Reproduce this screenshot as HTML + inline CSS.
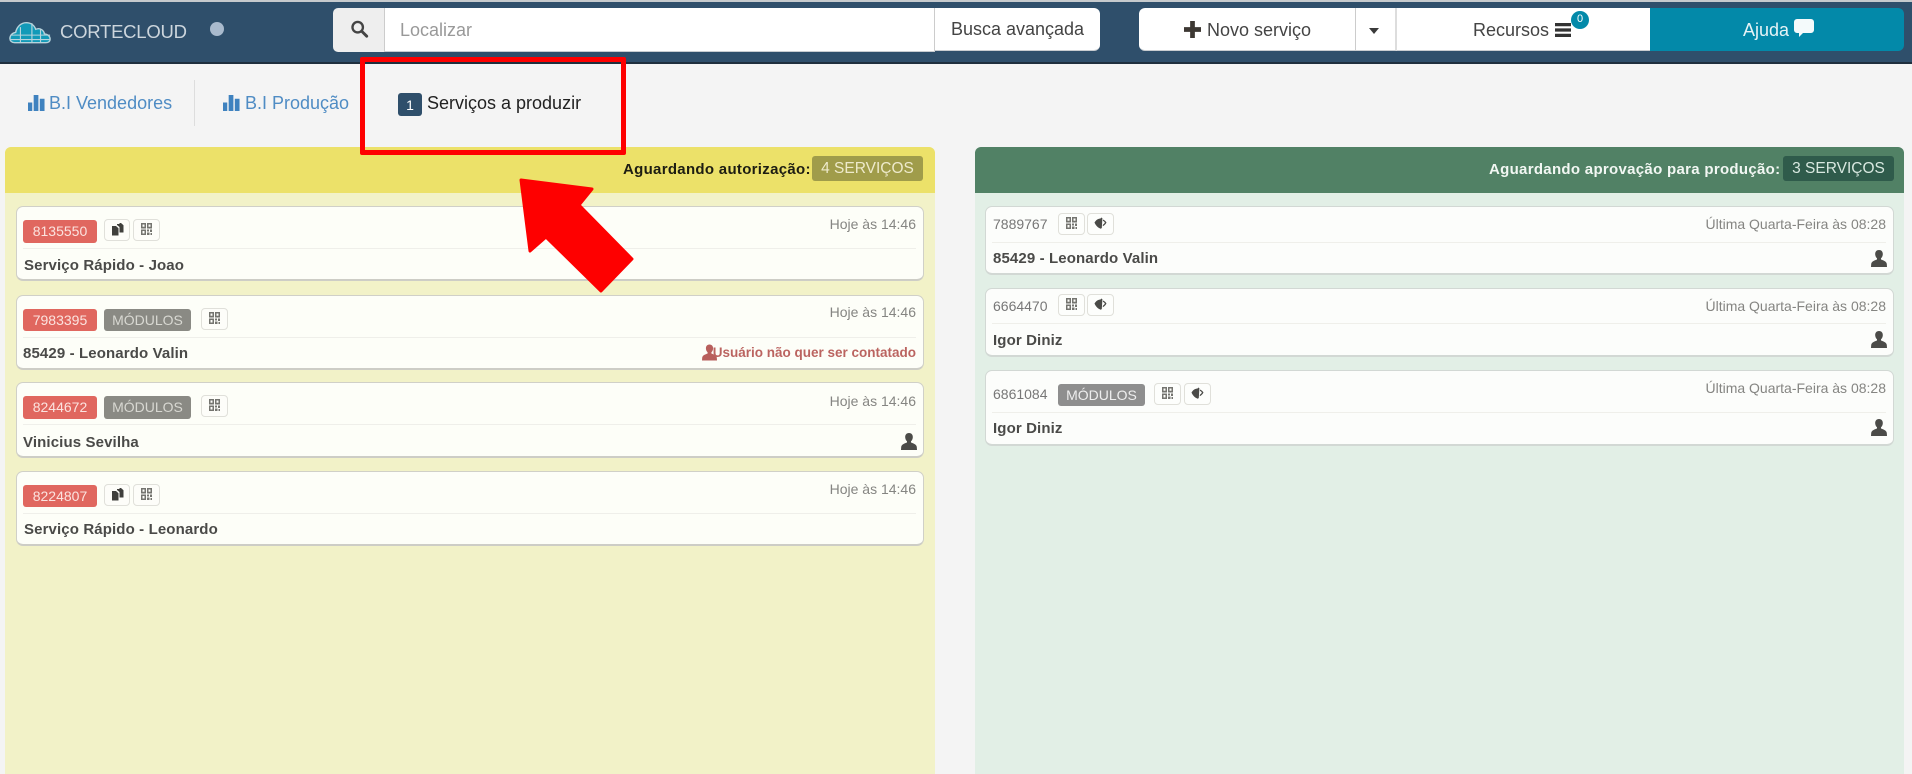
<!DOCTYPE html>
<html lang="pt-BR"><head><meta charset="utf-8"><title>Cortecloud</title>
<style>
*{box-sizing:border-box}
html{background:#f4f4f4}
html,body{margin:0;padding:0;width:1912px;height:774px;overflow:hidden;font-family:"Liberation Sans",sans-serif}
body{filter:blur(.3px)}
.a{position:absolute}
.t{position:absolute;white-space:nowrap;line-height:20px;height:20px}
.card{position:absolute;border:1px solid #d0d0c8;border-bottom:2px solid #cdcdc6;border-radius:7px}
.y{background:#fdfef8;left:16px;width:908px}
.g{background:#fcfdfb;left:985px;width:909px;border-color:#d2d8d4}
.div{position:absolute;height:1px;background:#efefea}
.dy{left:23px;width:893px}.dg{left:992px;width:894px}
.lab{position:absolute;border-radius:3px;color:#fbe3df;font-size:14px;text-align:center;height:23px;line-height:22px}
.r{background:#e0675f;left:23px;width:74px}
.m{background:#8a8a84;color:#d8d8d2;left:104px;width:87px;font-weight:400}
.ib{position:absolute;border:1px solid #e0e0da;border-radius:4px;background:#fdfdf9;height:22px;width:27px}
.ib svg{position:absolute;left:6px;top:2px;width:13px;height:14px}
.nm{font-weight:700;font-size:15px;letter-spacing:.12px;color:#4a4a48}
.tm{font-size:14px;color:#858582;text-align:right}
.id{font-size:14px;color:#777}
.pu{position:absolute;width:16px;height:17px;fill:#4b4b48}
.hd{font-weight:700;font-size:15px;letter-spacing:.3px}
.bd{position:absolute;height:25px;width:111px;border-radius:3px;top:156px;text-align:center;font-size:15.5px;line-height:25px}
.wb{position:absolute;background:#fff;top:8px;height:43px;color:#444;font-size:18px;line-height:42px;text-align:center;border-bottom:1px solid #c8ccd0}
.tab{font-size:18px;color:#4f8cc4}
</style></head><body>
<svg width="0" height="0" style="position:absolute"><defs>
<symbol id="qr" viewBox="0 0 13 14"><path fill="#74746f" d="M1 1h5v5.500H1zM7 1h5v5.500H7zM1 7.500h5V13H1zM7 7.500h2V9.500H7zM10 7.500h2v2.500h-2zM7 10.500h2.500V13H7zM10.500 11h1.500v2h-1.500z"/><path fill="#fdfdf9" d="M2.500 2.500h2v2.300h-2zM8.500 2.500h2v2.300h-2zM2.500 9h2v2.500h-2z"/></symbol>
<symbol id="cp" viewBox="0 0 13 14"><path fill="#3f3f3c" d="M1 4h4l2.500 2.200V13.500H1zM6 2h2.500V1H10l2.500 2.200V10.500H8.500V5L6 3z"/></symbol>
<symbol id="ey" viewBox="0 0 13 14"><path fill="#4a4a47" d="M.5 6.500C2 4 4 2.600 6.500 2.500l1-1 .9.700-.6 9.800-1 .7C3.800 11.800 1.800 9.500.5 6.500z"/><path fill="#4a4a47" d="M9 3.500c1.600.7 2.700 1.800 3.500 3-.9 1.800-2.200 3.100-3.800 3.800l.2-1.600c.8-.5 1.500-1.200 2-2.200-.5-.7-1.200-1.300-2-1.700z"/></symbol>
<symbol id="pu" viewBox="0 0 16 17"><path d="M8 0c2.700 0 4 2 3.800 4.500-.1 1.600-.9 3-1.800 3.800v1.200c1.800.8 5.500 1.700 5.800 4.500l.2 3H0l.2-3c.3-2.800 4-3.700 5.800-4.500V8.300C5.100 7.500 4.300 6.100 4.200 4.500 4 2 5.300 0 8 0z"/></symbol>
<symbol id="bar" viewBox="0 0 18 18"><path d="M0 9h4.500v9H0zM6 1h5v17H6zM12.500 5H17.500v13h-5z"/></symbol>
</defs></svg>

<!-- header -->
<div class="a" style="left:0;top:0;width:1912px;height:64px;background:#2f4f6b;border-top:2px solid #c6cacd;border-bottom:2px solid #1f2f3e"></div>
<svg class="a" style="left:8px;top:20px" width="44" height="24" viewBox="0 0 46 27" preserveAspectRatio="none">
<path d="M2 21c0-4 2.600-6.500 6-7 1-5.500 5-11 11-11 5 0 8.600 3 10 7.500 1.500-.8 3-1 4.500-.5 3 1 4.200 3.500 4.500 5.500 3.500.5 6 2.600 6 6 0 2.800-2 4-4.500 4H7c-3 0-5-2-5-4.500z" fill="#129ab8" stroke="#b6d3dc" stroke-width="1.500"/>
<path d="M2.500 17H44M2.500 22H44M13 8v17M25 3.500V25M34 10v15" stroke="#b6d3dc" stroke-width="1.200" fill="none"/></svg>
<div class="t" style="left:60px;top:22px;font-size:18.500px;letter-spacing:-.25px;color:#cdd6dd">CORTECLOUD</div>
<div class="a" style="left:210px;top:22px;width:14px;height:14px;border-radius:50%;background:#a9bacd"></div>

<div class="a" style="left:333px;top:8px;width:52px;height:44px;background:#eee;border-radius:5px 0 0 5px;border-right:1px solid #ccc"></div>
<svg class="a" style="left:350px;top:20px" width="19" height="18" viewBox="0 0 20 20"><circle cx="8" cy="8" r="5.800" fill="none" stroke="#444" stroke-width="2.600"/><path d="M12.500 12.500L18 18" stroke="#444" stroke-width="3.200" stroke-linecap="round"/></svg>
<div class="a" style="left:385px;top:8px;width:550px;height:44px;background:#fff;border-bottom:1px solid #c8ccd0"></div>
<div class="t" style="left:400px;top:20px;font-size:18px;color:#999">Localizar</div>
<div class="wb" style="left:934px;width:166px;border-left:1px solid #ccc;border-radius:0 6px 6px 0">Busca avançada</div>

<div class="wb" style="left:1139px;width:216px;border-radius:6px 0 0 6px"></div>
<svg class="a" style="left:1184px;top:21px" width="17" height="17" viewBox="0 0 18 18"><path fill="#3d3833" d="M6.500 0h5v6.500H18v5h-6.500V18h-5v-6.500H0v-5h6.500z"/></svg>
<div class="t" style="left:1207px;top:20px;font-size:18px;color:#444">Novo serviço</div>
<div class="wb" style="left:1355px;width:42px;border-left:1px solid #ccc;border-right:2px solid #ddd"></div>
<div class="a" style="left:1369px;top:28px;width:0;height:0;border-left:5px solid transparent;border-right:5px solid transparent;border-top:6px solid #3a3a3a"></div>
<div class="wb" style="left:1397px;width:254px"></div>
<div class="t" style="left:1473px;top:20px;font-size:18px;color:#444">Recursos</div>
<svg class="a" style="left:1555px;top:23px" width="16" height="14" viewBox="0 0 16 14"><path fill="#333" d="M0 0h16v3.200H0zM0 5.400h16v3.200H0zM0 10.800h16V14H0z"/></svg>
<div class="a" style="left:1571px;top:11px;width:18px;height:18px;border-radius:50%;background:#0389a9;color:#fff;font-size:11px;line-height:17px;text-align:center">0</div>
<div class="a" style="left:1650px;top:8px;width:254px;height:43px;background:#0389a9;border-radius:0 6px 6px 0"></div>
<div class="t" style="left:1743px;top:20px;font-size:18px;color:#e6f3f6">Ajuda</div>
<svg class="a" style="left:1794px;top:19px" width="20" height="18" viewBox="0 0 20 18"><path fill="#f4fafb" d="M3 0h14a3 3 0 0 1 3 3v8a3 3 0 0 1-3 3H9l-4 4v-4H3a3 3 0 0 1-3-3V3a3 3 0 0 1 3-3z"/></svg>

<!-- tabs -->
<svg class="a" style="left:28px;top:94px;fill:#3f82bf" width="17" height="17"><use href="#bar"/></svg>
<div class="t tab" style="left:49px;top:93px">B.I Vendedores</div>
<div class="a" style="left:194px;top:80px;width:1px;height:46px;background:#ddd"></div>
<svg class="a" style="left:223px;top:94px;fill:#3f82bf" width="17" height="17"><use href="#bar"/></svg>
<div class="t tab" style="left:245px;top:93px">B.I Produção</div>
<div class="a" style="left:398px;top:93px;width:24px;height:23px;background:#2f4f6b;border-radius:3px;color:#fff;font-size:14px;line-height:24px;text-align:center">1</div>
<div class="t" style="left:427px;top:93px;font-size:18px;color:#222">Serviços a produzir</div>

<!-- left panel -->
<div class="a" style="left:5px;top:147px;width:930px;height:640px;background:#f2f2c8;border-radius:6px 6px 0 0;overflow:hidden"><div style="height:46px;background:#ece169"></div></div>
<div class="t hd" style="left:623px;top:160px;color:#1d1d12">Aguardando autorização:</div>
<div class="bd" style="left:812px;background:#a09c4a;color:#eeeacb">4 SERVIÇOS</div>

<div class="card y" style="top:206px;height:75px"></div>
<div class="lab r" style="top:220px">8135550</div>
<div class="ib" style="left:104px;top:219px;width:26px"><svg><use href="#cp"/></svg></div>
<div class="ib" style="left:133px;top:219px"><svg><use href="#qr"/></svg></div>
<div class="t tm" style="right:996px;top:214px">Hoje às 14:46</div>
<div class="div dy" style="top:248px"></div>
<div class="t nm" style="left:24px;top:256px">Serviço Rápido - Joao</div>

<div class="card y" style="top:295px;height:75px"></div>
<div class="lab r" style="top:309px;height:22px">7983395</div>
<div class="lab m" style="top:309px;height:22px">MÓDULOS</div>
<div class="ib" style="left:201px;top:308px"><svg><use href="#qr"/></svg></div>
<div class="t tm" style="right:996px;top:302px">Hoje às 14:46</div>
<div class="div dy" style="top:337px"></div>
<div class="t nm" style="left:23px;top:344px">85429 - Leonardo Valin</div>
<svg class="pu" style="left:702px;top:344px;width:15px;fill:#b85f5c"><use href="#pu"/></svg>
<div class="t" style="right:996px;top:343px;font-size:13.500px;font-weight:700;color:#bb6460">Usuário não quer ser contatado</div>

<div class="card y" style="top:382px;height:76px"></div>
<div class="lab r" style="top:396px">8244672</div>
<div class="lab m" style="top:396px">MÓDULOS</div>
<div class="ib" style="left:201px;top:395px"><svg><use href="#qr"/></svg></div>
<div class="t tm" style="right:996px;top:391px">Hoje às 14:46</div>
<div class="div dy" style="top:424px"></div>
<div class="t nm" style="left:23px;top:433px">Vinicius Sevilha</div>
<svg class="pu" style="left:901px;top:433px"><use href="#pu"/></svg>

<div class="card y" style="top:471px;height:75px"></div>
<div class="lab r" style="top:485px;height:22px">8224807</div>
<div class="ib" style="left:104px;top:484px;width:26px"><svg><use href="#cp"/></svg></div>
<div class="ib" style="left:133px;top:484px"><svg><use href="#qr"/></svg></div>
<div class="t tm" style="right:996px;top:479px">Hoje às 14:46</div>
<div class="div dy" style="top:513px"></div>
<div class="t nm" style="left:24px;top:520px">Serviço Rápido - Leonardo</div>

<!-- right panel -->
<div class="a" style="left:975px;top:147px;width:929px;height:640px;background:#e2efe6;border-radius:6px 6px 0 0;overflow:hidden"><div style="height:46px;background:#518165"></div></div>
<div class="t hd" style="left:1489px;top:160px;color:#f2f7f3">Aguardando aprovação para produção:</div>
<div class="bd" style="left:1783px;background:#2f5b4b;color:#d8e8e0">3 SERVIÇOS</div>

<div class="card g" style="top:206px;height:69px"></div>
<div class="t id" style="left:993px;top:214px">7889767</div>
<div class="ib" style="left:1058px;top:213px;background:#fdfefc"><svg><use href="#qr"/></svg></div>
<div class="ib" style="left:1087px;top:213px;background:#fdfefc"><svg><use href="#ey"/></svg></div>
<div class="t tm" style="right:26px;top:214px">Última Quarta-Feira às 08:28</div>
<div class="div dg" style="top:242px"></div>
<div class="t nm" style="left:993px;top:249px">85429 - Leonardo Valin</div>
<svg class="pu" style="left:1871px;top:250px"><use href="#pu"/></svg>

<div class="card g" style="top:288px;height:69px"></div>
<div class="t id" style="left:993px;top:296px">6664470</div>
<div class="ib" style="left:1058px;top:294px;background:#fdfefc"><svg><use href="#qr"/></svg></div>
<div class="ib" style="left:1087px;top:294px;background:#fdfefc"><svg><use href="#ey"/></svg></div>
<div class="t tm" style="right:26px;top:296px">Última Quarta-Feira às 08:28</div>
<div class="div dg" style="top:323px"></div>
<div class="t nm" style="left:993px;top:331px">Igor Diniz</div>
<svg class="pu" style="left:1871px;top:331px"><use href="#pu"/></svg>

<div class="card g" style="top:370px;height:76px"></div>
<div class="t id" style="left:993px;top:384px">6861084</div>
<div class="lab" style="left:1058px;top:384px;width:87px;height:22px;background:#8e8e8e;color:#eee">MÓDULOS</div>
<div class="ib" style="left:1154px;top:383px;background:#fdfefc"><svg><use href="#qr"/></svg></div>
<div class="ib" style="left:1184px;top:383px;background:#fdfefc"><svg><use href="#ey"/></svg></div>
<div class="t tm" style="right:26px;top:378px">Última Quarta-Feira às 08:28</div>
<div class="div dg" style="top:412px"></div>
<div class="t nm" style="left:993px;top:419px">Igor Diniz</div>
<svg class="pu" style="left:1871px;top:419px"><use href="#pu"/></svg>

<!-- annotation -->
<div class="a" style="left:360px;top:57px;width:266px;height:98px;border:5px solid #fe0000;border-radius:2px"></div>
<svg class="a" style="left:0;top:0" width="1912" height="774"><path d="M521 180L592 189L579 205L632 259L601 291L546 237L530 251z" fill="#fe0000" stroke="#fe0000" stroke-width="3" stroke-linejoin="round"/></svg>
</body></html>
